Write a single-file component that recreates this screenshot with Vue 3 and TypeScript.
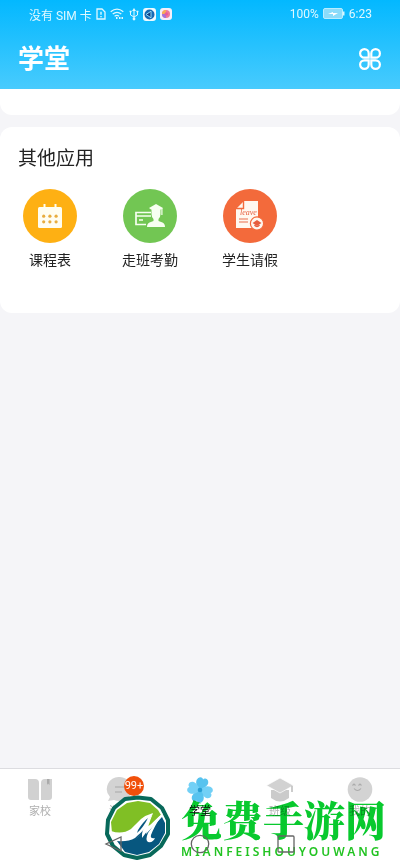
<script setup lang="ts">
interface AppItem {
  id: string
  label: string
}

interface TabItem {
  id: string
  label: string
  active?: boolean
  badge?: string
}

const apps: AppItem[] = [
  { id: 'timetable', label: '课程表' },
  { id: 'attendance', label: '走班考勤' },
  { id: 'leave', label: '学生请假' },
]

const tabs: TabItem[] = [
  { id: 'home', label: '家校' },
  { id: 'message', label: '消息', badge: '99+' },
  { id: 'school', label: '学堂', active: true },
  { id: 'class', label: '班级' },
  { id: 'mine', label: '我的' },
]
</script>

<template>
  <div class="screen">
    <header class="top">
      <div class="status">
        <div class="status-side">
          <span>没有 SIM 卡</span>
          <svg viewBox="0 0 10 12" width="10" height="12" fill="none" stroke="currentColor">
            <path d="M1 1h5l3 3v7H1z" stroke-width="1.3" />
            <path d="M5 3.8v3M5 8v1.3" stroke-width="1.4" />
          </svg>
          <svg viewBox="0 0 15 12" width="15" height="12" fill="none" stroke="currentColor" stroke-width="1.3">
            <path d="M.7 3.7Q7 -1.3 13.3 3.7M2.7 6Q7 2.7 11.3 6M4.6 8.2Q7 6.4 9 8.2" />
            <path d="M6 10h1.5M9 10h1.5M11.5 10H13" stroke-width="2" />
          </svg>
          <svg viewBox="0 0 10 13" width="10" height="13" fill="none" stroke="currentColor">
            <path d="M5 2v9M1.5 4v3L5 9l3.5-2V4" />
            <path d="M5 0l2 3H3z" fill="currentColor" stroke="none" />
            <circle cx="5" cy="11" r="1.4" fill="currentColor" stroke="none" />
            <path d="M.6 3.5h2M7.4 3.5h2" stroke-width="1.6" />
          </svg>
          <svg viewBox="0 0 13 13" width="13" height="13">
            <rect width="13" height="13" rx="3" fill="#eefaff" />
            <circle cx="6.5" cy="6.5" r="5" fill="#1769b4" />
            <path d="M3 6.5l5-3.3v6.6z" fill="#163d82" stroke="#8ed9f4" />
          </svg>
          <svg viewBox="0 0 12 12" width="12" height="12">
            <rect width="12" height="12" rx="3" fill="#f4effa" />
            <circle cx="6" cy="6" r="4" fill="#f07899" />
            <path d="M2 6a4 4 0 0 1 4-4v4z" fill="#f7ae56" />
            <path d="M6 10a4 4 0 0 1-4-4h4z" fill="#a174dc" />
            <circle cx="6.3" cy="6" r="1.8" fill="#e85b9d" />
          </svg>
        </div>
        <div class="status-side">
          <span>100%</span>
          <svg viewBox="0 0 22 12" width="22" height="12">
            <rect x=".5" y=".5" width="19" height="10" rx="1.5" fill="#8bdcfa" stroke="#b8edff" />
            <path d="M20.5 3.5v4" stroke="#d6f7ff" stroke-width="2" />
            <path d="M5 6l5-2v1h5L10 8V6z" fill="#fff" />
          </svg>
          <span>6:23</span>
        </div>
      </div>
      <div class="title-row">
        <h1>学堂</h1>
        <button class="menu" type="button" aria-label="全部应用">
          <svg viewBox="0 0 24 24" width="24" height="24" fill="none" stroke="currentColor" stroke-width="2.2">
            <path d="M10.7 10.7H6.4a4.3 4.3 0 1 1 4.3-4.3zM13.3 10.7V6.4a4.3 4.3 0 1 1 4.3 4.3zM10.7 13.3v4.3a4.3 4.3 0 1 1-4.3-4.3zM13.3 13.3h4.3a4.3 4.3 0 1 1-4.3 4.3z" />
          </svg>
        </button>
      </div>
    </header>

    <main>
      <div class="previous-card"></div>
      <section class="card">
        <h2>其他应用</h2>
        <div class="apps">
          <a v-for="app in apps" :key="app.id" class="app" href="#">
            <svg v-if="app.id === 'timetable'" viewBox="0 0 54 54" width="54" height="54">
              <circle cx="27" cy="27" r="27" fill="#feb013" />
              <rect x="15" y="18" width="24" height="21" rx="1.5" fill="#fffdf0" />
              <path d="M21.5 15v5M32.5 15v5" stroke="#fffdf0" stroke-width="2" />
              <g fill="#e8ac3d">
                <circle v-for="x in 3" :key="'a' + x" :cx="14.5 + x * 6.2" cy="27.2" r="1.6" />
                <circle v-for="x in 3" :key="'b' + x" :cx="14.5 + x * 6.2" cy="32.8" r="1.6" />
              </g>
            </svg>
            <svg v-else-if="app.id === 'attendance'" viewBox="0 0 54 54" width="54" height="54">
              <circle cx="27" cy="27" r="27" fill="#72c653" />
              <path d="M28 23.5H13v12h10M13 27h15M16 31h4" fill="none" stroke="#f7fff1" stroke-width="1.7" />
              <g fill="#f7fff1">
                <path d="M26 19l7-4 7 4-2 1.500h-10z" />
                <path d="M28.500 20h9v5q0 3-2 5v2l4 1.500q2.500 1 2.500 4.500H24q0-3.500 2.500-4.500l4-1.500v-2q-2-2-2-5z" />
                <path d="M38.300 19h1.200v7h-1.200z" />
              </g>
            </svg>
            <svg v-else viewBox="0 0 54 54" width="54" height="54">
              <circle cx="27" cy="27" r="27" fill="#f36a3b" />
              <path d="M21 12h14v27H13V20z" fill="#fff8f0" />
              <path d="M20.5 12v7.5H13" fill="none" stroke="#f36a3b" stroke-width="1.4" />
              <path d="M16 30h9M16 33h9" stroke="#e96e4c" stroke-width="1.2" />
              <text class="leave-text" x="17" y="26">leave</text>
              <circle cx="34" cy="34.5" r="6.6" fill="#fff8f0" stroke="#f36a3b" stroke-width="1.2" />
              <path d="M29.5 34l4.5-3 4.5 3-4.5 3z" fill="#e75e3d" />
              <path d="M31.5 36q2.5 3 5 0" fill="none" stroke="#e75e3d" stroke-width="1.3" />
            </svg>
            <span>{{ app.label }}</span>
          </a>
        </div>
      </section>
    </main>

    <footer class="bottom">
      <nav class="tabs">
        <a v-for="tab in tabs" :key="tab.id" class="tab" :class="{ active: tab.active }" href="#">
          <span class="tab-icon">
            <svg v-if="tab.id === 'home'" viewBox="0 0 28 28" width="28" height="28" fill="#d1d1d1">
              <path d="M2 3h7q4 0 4 4v17H5q-3 0-3-3zM19 3h7v18q0 3-3 3h-8V7q0-4 4-4z" />
              <path d="M21 3h2.5v6L22 7.5 21 9z" fill="#aaa" />
            </svg>
            <svg v-else-if="tab.id === 'message'" viewBox="0 0 28 28" width="28" height="28">
              <path d="M14 1a13 12 0 1 1-6 23l-6 1 2-4A12 12 0 0 1 14 1z" fill="#d3d3d3" />
              <path d="M9 11h10M9 16h7" stroke="#b7b7b7" stroke-width="1.5" />
            </svg>
            <svg v-else-if="tab.id === 'school'" viewBox="0 0 28 28" width="28" height="28">
              <g transform="rotate(16 14 14)">
                <path
                  v-for="angle in [0, 90, 180, 270]"
                  :key="angle"
                  d="M14 14.5C10 11.500 7.500 8.500 8 5q.8-3.800 4-3.500 1.500.2 2 1.500.5-1.300 2-1.500 3.200-.3 4 3.500.5 3.500-6 9.500z"
                  :transform="`rotate(${angle} 14 14)`"
                  :fill="angle % 180 ? '#72d0f6' : '#57c3ef'"
                />
              </g>
              <circle cx="14" cy="14" r="2.3" fill="#299fd4" />
            </svg>
            <svg v-else-if="tab.id === 'class'" viewBox="0 0 28 28" width="28" height="28">
              <path d="M5 14v8q9 7 18 0v-8z" fill="#cbcbcb" />
              <path d="M.5 9.5L14 2l13.5 7.5L14 17z" fill="#d2d2d2" stroke="#fff" stroke-width=".7" />
              <path d="M26 10v6" stroke="#bbb" stroke-width="1.5" />
            </svg>
            <svg v-else viewBox="0 0 28 28" width="28" height="28">
              <circle cx="14" cy="13.5" r="12.3" fill="#d3d3d3" />
              <path d="M6.5 9.5L8 8l1.5 1.5M12.5 9.5L14 8l1.5 1.5M8 12.5q3.5 4 7 0" fill="none" stroke="#aaa" stroke-width="1.1" />
            </svg>
            <b v-if="tab.badge" class="badge">{{ tab.badge }}</b>
          </span>
          <span>{{ tab.label }}</span>
        </a>
      </nav>
      <div class="system">
        <button type="button" aria-label="返回">
          <svg viewBox="0 0 20 20" width="20" height="20"><path d="M17 3v14L2 10z" /></svg>
        </button>
        <button type="button" aria-label="主屏幕">
          <svg viewBox="0 0 20 20" width="20" height="20"><circle cx="10" cy="10" r="8.7" /></svg>
        </button>
        <button type="button" aria-label="最近任务">
          <svg viewBox="0 0 20 20" width="20" height="20"><rect x="2" y="2" width="16" height="16" rx="1" /></svg>
        </button>
      </div>
      <svg class="mark-logo" viewBox="0 0 68 66" width="68" height="66">
        <path
          d="M34 2.5L47 4 58 13 64 25 64 39 57 51 46 60 33 63 20 60 9 51 3 39 4 25 10 13 21 4z"
          fill="#fff"
          stroke="#08695a"
          stroke-width="4"
          stroke-linejoin="round"
        />
        <path d="M8 38L7 27 13 15 23 8 34 6 46 8 54 15 57 20 46 30 30 38 20 40z" fill="#80bf25" />
        <path d="M13 46Q24 47 31 43L43 31 42 39 58 22 61 28 61 38 55 49 45 57 33 60 21 57z" fill="#07577f" />
        <path d="M7 36Q18 40 27 34 33 28 37 24 42 20 49 18L43 30Q37 39 29 43 20 46 10 44z" fill="#fff" />
        <path d="M31 45Q38 39 46 23L49 18Q44 31 43 36 49 26 59 18 50 32 47 40 46 44 51 43 49 48 44 47 41 45 44 38L51 28Q43 35 38 43 37 36 43 28 39 37 31 45z" fill="#fff" />
        <path d="M34 35Q39 27 44 23 39 33 33 38z" fill="#07577f" />
      </svg>
      <div class="watermark">
        <strong>免费手游网</strong>
        <span>MIANFEISHOUYOUWANG</span>
      </div>
    </footer>
  </div>
</template>

<style>
body {
  margin: 0;
}
</style>

<style scoped>
.screen {
  min-height: 100vh;
  display: flex;
  flex-direction: column;
  background: #f5f5f8;
  color: #222;
  font-family: Roboto, "Noto Sans CJK SC", sans-serif;
}
.screen * {
  box-sizing: border-box;
}
svg {
  display: block;
}
a {
  color: inherit;
  text-decoration: none;
}
button {
  padding: 0;
  border: 0;
  background: none;
  color: inherit;
}
.top {
  height: 89px;
  background: linear-gradient(#03b8ff, #48cbfd);
  color: #fff;
}
.status {
  height: 28px;
  padding: 0 28px 0 29px;
  display: flex;
  align-items: center;
  justify-content: space-between;
  font-size: 12px;
  color: #dff8ff;
}
.status-side {
  display: flex;
  align-items: center;
  gap: 4px;
}
.title-row {
  padding: 12px 18px 0;
  display: flex;
  align-items: center;
  justify-content: space-between;
}
h1,
h2 {
  margin: 0;
}
h1 {
  font-size: 26px;
  line-height: 38px;
  font-weight: 700;
}
main {
  flex: 1;
}
.previous-card {
  height: 26px;
  background: #fff;
  border-radius: 0 0 12px 12px;
}
.card {
  margin-top: 12px;
  padding: 18px 0 42px;
  background: #fff;
  border-radius: 12px;
}
h2 {
  padding: 0 18px;
  font-size: 19px;
  line-height: 28px;
  font-weight: 400;
}
.apps {
  display: grid;
  grid-template-columns: repeat(4, 1fr);
  padding-top: 16px;
}
.app {
  display: flex;
  flex-direction: column;
  align-items: center;
  gap: 6px;
  font-size: 14px;
  line-height: 22px;
}
.leave-text {
  font: italic 8px "Liberation Serif", serif;
  fill: #e75e3d;
}
.bottom {
  position: relative;
  background: #fff;
  border-top: 1px solid #dcdce0;
}
.tabs {
  display: grid;
  grid-template-columns: repeat(5, 1fr);
  padding-top: 7px;
}
.tab {
  display: flex;
  flex-direction: column;
  align-items: center;
  font-size: 11px;
  line-height: 16px;
  color: #b0b0b0;
}
.tab.active {
  color: #111;
}
.tab-icon {
  position: relative;
}
.badge {
  position: absolute;
  left: 18px;
  top: 0;
  width: 20px;
  height: 20px;
  border-radius: 50%;
  background: #f1500b;
  color: #fff;
  font-size: 11px;
  line-height: 20px;
  font-weight: 400;
  text-align: center;
}
.system {
  position: relative;
  z-index: 2;
  height: 46px;
  padding: 2px 26% 0;
  display: flex;
  align-items: center;
  justify-content: space-between;
}
.system svg {
  fill: none;
  stroke: #656565;
  stroke-width: 1.3;
}
.mark-logo {
  position: absolute;
  left: 104px;
  bottom: 5px;
}
.watermark {
  position: absolute;
  left: 181px;
  bottom: 6px;
  display: flex;
  flex-direction: column;
  color: #08c92e;
  white-space: nowrap;
  mix-blend-mode: multiply;
}
.watermark strong {
  font-family: "Noto Serif CJK SC", "Noto Sans CJK SC", serif;
  font-size: 41px;
  line-height: 50px;
  font-weight: 900;
}
.watermark span {
  font-family: "Noto Sans", sans-serif;
  font-size: 12px;
  line-height: 16px;
  font-weight: 600;
  letter-spacing: 3px;
  color: #22c322;
}
</style>
